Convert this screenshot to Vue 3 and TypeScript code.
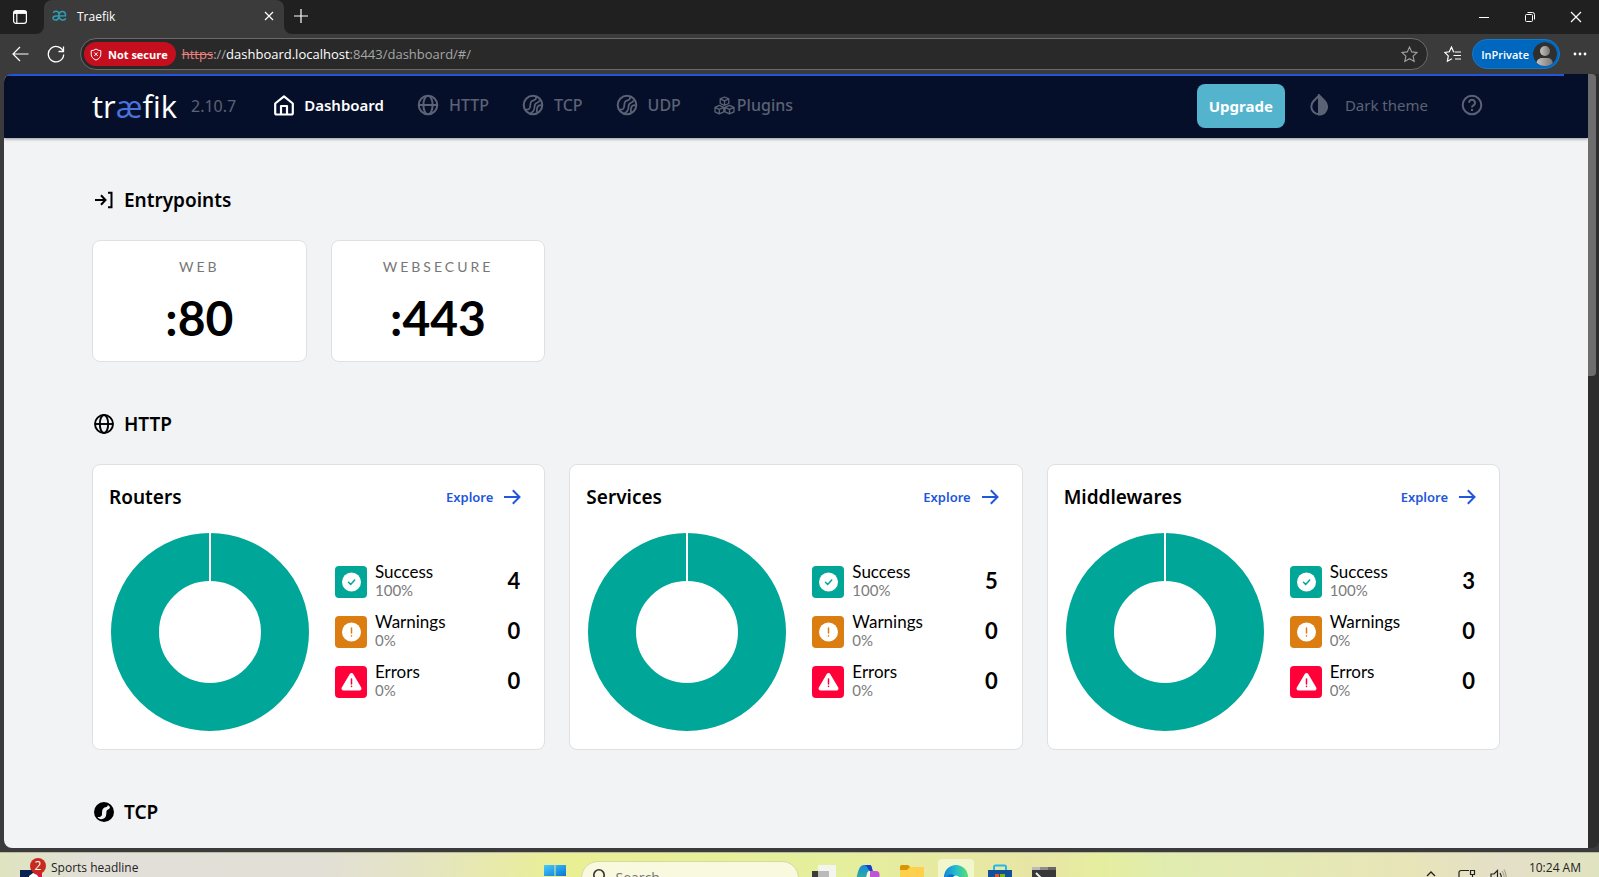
<script setup lang="ts">
interface Stat { label: string; percent: string; value: number; kind: 'success' | 'warning' | 'error' }
interface Panel { title: string; stats: Stat[] }

const entrypoints = [
  { name: 'WEB', port: ':80' },
  { name: 'WEBSECURE', port: ':443' },
]

function makePanel(title: string, ok: number): Panel {
  return {
    title,
    stats: [
      { label: 'Success', percent: '100%', value: ok, kind: 'success' },
      { label: 'Warnings', percent: '0%', value: 0, kind: 'warning' },
      { label: 'Errors', percent: '0%', value: 0, kind: 'error' },
    ],
  }
}

const panels: Panel[] = [makePanel('Routers', 4), makePanel('Services', 5), makePanel('Middlewares', 3)]
const nav = ['HTTP', 'TCP', 'UDP']
</script>

<template>
  <div class="desktop">
    <div class="window">
      <div class="tabbar">
        <button class="plain tab-actions" aria-label="Tab actions">
          <svg width="16" height="16" viewBox="0 0 16 16" fill="none" stroke="#fff" stroke-width="1.2"><rect x="1.6" y="1.6" width="12.8" height="12.8" rx="2.4" /><path d="M1.6 3.4h12.8" stroke-width="3" /><path d="M4.8 4v10" /></svg>
        </button>
        <div class="tab">
          <svg class="favicon" width="15" height="12" viewBox="0 0 15 12" fill="none" stroke="#2f9fb8" stroke-width="1.5" stroke-linecap="round"><path d="M1.5 2.2C3 .8 6.2.6 6.8 3.2c.5 2.3.4 6.900-3 6.900-3.800 0-3.700-4 .2-4.200l9.500-.1C13.800 2.700 12 1.200 10 1.500 7.500 1.900 6.800 4 7 6.200c.3 3.700 4 4.800 6.500 2.700" /></svg>
          <span class="tab-title">Traefik</span>
          <button class="plain" aria-label="Close tab"><svg width="10" height="10" viewBox="0 0 10 10" stroke="#fff" stroke-width="1.2"><path d="M1 1l8 8M9 1L1 9" /></svg></button>
        </div>
        <button class="plain new-tab" aria-label="New tab"><svg width="14" height="14" viewBox="0 0 14 14" stroke="#fff" stroke-width="1.2"><path d="M7 0v14M0 7h14" /></svg></button>
        <div class="win-buttons">
          <button class="plain" aria-label="Minimize"><svg width="12" height="12" viewBox="0 0 12 12" stroke="#fff"><path d="M1 6.500h10" /></svg></button>
          <button class="plain" aria-label="Restore"><svg width="12" height="12" viewBox="0 0 12 12" fill="none" stroke="#fff"><rect x="1.500" y="3.500" width="7" height="7" rx="1" /><path d="M3.500 1.500h5a2 2 0 0 1 2 2v5" /></svg></button>
          <button class="plain" aria-label="Close"><svg width="12" height="12" viewBox="0 0 12 12" stroke="#fff" stroke-width="1.200"><path d="M1 1l10 10M11 1L1 11" /></svg></button>
        </div>
      </div>

      <div class="toolbar">
        <button class="plain back" aria-label="Back"><svg width="18" height="16" viewBox="0 0 18 16" fill="none" stroke="#fff" stroke-width="1.200"><path d="M16.500 8H1M8 1L1 8l7 7" /></svg></button>
        <button class="plain reload" aria-label="Refresh"><svg width="18" height="18" viewBox="0 0 18 18" fill="none" stroke="#fff" stroke-width="1.300"><path d="M16.400 7A7.700 7.700 0 1 0 16.700 9.500M16.500 1.500V6.500H11.500" /></svg></button>
        <div class="address">
          <span class="insecure">
            <svg width="12" height="13" viewBox="0 0 12 13" fill="none" stroke="#fff"><path d="M6 1c1.300 1 2.800 1.600 4.800 1.700v3.500c0 2.600-1.700 4.700-4.800 5.900-3.100-1.200-4.800-3.300-4.800-5.900V2.700C3.200 2.600 4.700 2 6 1z" /><path d="M4.200 4.400l3.600 3.600M7.800 4.400L4.200 8" /></svg>
            Not secure
          </span>
          <span class="url"><s>https</s>://<b>dashboard.localhost</b>:8443/dashboard/#/</span>
          <button class="plain star" aria-label="Add to favorites"><svg width="17" height="17" viewBox="0 0 17 17" fill="none" stroke="#a0a0a0" stroke-width="1.100"><path d="M8.500 1l2.200 4.900 5.300.6-3.900 3.600 1.100 5.300-4.700-2.700-4.700 2.700 1.100-5.300L1 6.500l5.300-.6z" /></svg></button>
        </div>
        <button class="plain" aria-label="Favorites"><svg width="18" height="17" viewBox="0 0 18 17" fill="none" stroke="#fff" stroke-width="1.200"><path d="M10.500 6l-1-.2L7.500 1 5.300 5.800l-4.500.7 3.500 3.400-.9 5.300 4.600-2.500M11 6h6M9.500 9.500H17M11 13h6" /></svg></button>
        <button class="profile">InPrivate
          <svg width="24" height="24" viewBox="0 0 24 24"><defs><linearGradient id="avatar"><stop offset="0" stop-color="#c8c3bf" /><stop offset="1" stop-color="#777" /></linearGradient><clipPath id="round"><circle cx="12" cy="12" r="12" /></clipPath></defs><g clip-path="url(#round)"><circle cx="12" cy="12" r="12" fill="#302f2f" /><circle cx="12" cy="9" r="5" fill="url(#avatar)" /><path d="M3 24c0-6 3-8 6-8h6c4 0 5 4 5 8z" fill="url(#avatar)" /></g></svg>
        </button>
        <button class="plain more" aria-label="Settings and more"><svg width="14" height="4" viewBox="0 0 14 4" fill="#fff"><circle cx="2" cy="2" r="1.400" /><circle cx="7" cy="2" r="1.400" /><circle cx="12" cy="2" r="1.400" /></svg></button>
      </div>

      <div class="viewport">
        <div class="page">
          <header class="header">
            <a class="logo" href="#/" aria-label="træfik">tr<i>æ</i>fik</a>
            <span class="version">2.10.7</span>
            <nav class="nav">
              <a href="#/" class="active">
                <svg width="20" height="21" viewBox="0 0 20 21" fill="none" stroke="currentColor" stroke-width="2.200" stroke-linejoin="round"><path d="M1.200 8.500L10 1.300l8.800 7.200V18a1.500 1.500 0 0 1-1.500 1.500H2.700A1.500 1.500 0 0 1 1.200 18z" /><path d="M7 19v-8h6v8" /></svg>Dashboard
              </a>
              <a v-for="n in nav" :key="n" :href="'#/' + n.toLowerCase()">
                <svg v-if="n === 'HTTP'" width="22" height="22" viewBox="0 0 22 22" fill="none" stroke="currentColor" stroke-width="2"><circle cx="11" cy="11" r="9.300" /><ellipse cx="11" cy="11" rx="4.600" ry="9.300" /><path d="M2 11h18" /></svg>
                <svg v-else width="22" height="22" viewBox="0 0 22 22" fill="none" stroke="currentColor" stroke-width="2"><circle cx="11" cy="11" r="9.300" /><path d="M3.500 15.500c3 .6 4.500-.5 4.700-3.200C8.500 8.500 8.500 7 11.700 6.300c1.800-.4 2.500-1.400 2.500-3.300M8.500 19c3-1 4-2.800 4-6 0-3 .8-3.600 2.500-4.200 1.300-.5 2.200-1.300 2.700-2.400M15 18.500c-.3-2.500-.2-5 1-6.300.8-.8 2-1 3.500-1" stroke-width="1.700" /></svg>{{ n }}
              </a>
              <a href="#/plugins" class="plugins">
                <svg width="21" height="19" viewBox="0 0 21 19" fill="none" stroke="currentColor" stroke-width="1.300" stroke-linejoin="round"><path d="M10.500 1l4.300 1.900v4.600l-4.300 1.900-4.300-1.900V2.900zM6.200 2.900l4.300 2 4.300-2M10.500 4.900v4.500M5.300 9.400l4.500 1.900v4.600l-4.500 2-4.300-2v-4.600zM1 11.300l4.300 2 4.500-2M5.300 13.300v4.600M15.500 9.400l4.500 1.900v4.600l-4.500 2-4.500-2v-4.600zM11 11.300l4.500 2 4.500-2M15.500 13.300v4.600" /></svg>Plugins
              </a>
            </nav>
            <div class="header-actions">
              <a class="upgrade" href="#upgrade">Upgrade</a>
              <button class="plain theme"><svg width="20" height="22" viewBox="0 0 20 22" fill="none" stroke="currentColor" stroke-width="2"><path d="M10 1.500L4.400 7.300a7.700 7.700 0 1 0 11.200 0z" /><path d="M10 1.500l5.600 5.800A7.700 7.700 0 0 1 10 20.500z" fill="currentColor" /></svg>Dark theme</button>
              <button class="plain help" aria-label="Help"><svg width="22" height="22" viewBox="0 0 22 22" fill="none" stroke="currentColor" stroke-width="2"><circle cx="11" cy="11" r="9.300" /><path d="M8 8.800a3 3 0 1 1 4.500 2.600c-1 .6-1.500 1-1.500 2.100" /><path d="M11 15v2.100" /></svg></button>
            </div>
          </header>

          <main class="content">
            <h2 class="heading"><svg width="20" height="20" viewBox="0 0 20 20" fill="none" stroke="#000" stroke-width="2"><path d="M1 10h10M7 5.200L11.500 10 7 14.800M14 2.800h3.500v14.400H14" /></svg>Entrypoints</h2>
            <div class="entry-grid">
              <section v-for="e in entrypoints" :key="e.name" class="card entry">
                <div class="entry-name">{{ e.name }}</div>
                <div class="entry-port">{{ e.port }}</div>
              </section>
            </div>

            <h2 class="heading"><svg width="20" height="20" viewBox="0 0 20 20" fill="none" stroke="#000" stroke-width="1.900"><circle cx="10" cy="10" r="9" /><ellipse cx="10" cy="10" rx="4.200" ry="9" /><path d="M1 10h18" /></svg>HTTP</h2>
            <div class="panel-grid">
              <section v-for="p in panels" :key="p.title" class="card panel">
                <div class="panel-head">
                  <h3>{{ p.title }}</h3>
                  <a href="#/http">Explore<svg width="18" height="16" viewBox="0 0 18 16" fill="none" stroke="currentColor" stroke-width="2"><path d="M1 8h15M9.800 1.300L16.500 8l-6.700 6.700" /></svg></a>
                </div>
                <div class="panel-body">
                  <svg class="donut" width="200" height="200" viewBox="0 0 200 200"><circle cx="100" cy="100" r="75" fill="none" stroke="#00a697" stroke-width="48" /><path d="M100 0v50" stroke="#fff" stroke-width="2" /></svg>
                  <ul class="stats">
                    <li v-for="s in p.stats" :key="s.label">
                      <span class="badge" :class="s.kind">
                        <svg width="32" height="32" viewBox="0 0 32 32" fill="none" stroke-linecap="round">
                          <template v-if="s.kind === 'success'"><circle cx="16.500" cy="16" r="9.500" fill="#fff" /><path d="M13.500 16.300l2.200 2.200 4-4.400" stroke="#00a697" stroke-width="1.500" /></template>
                          <template v-else-if="s.kind === 'warning'"><circle cx="16.500" cy="16" r="9.500" fill="#fff" /><path d="M16.500 12v5M16.500 19.800v.2" stroke="#db7d11" stroke-width="1.500" /></template>
                          <template v-else><path d="M16.500 9L24.500 22.500H8.500z" fill="#fff" stroke="#fff" stroke-width="4" stroke-linejoin="round" /><path d="M16.500 13v5M16.500 20.200v.2" stroke="#ff0039" stroke-width="1.500" /></template>
                        </svg>
                      </span>
                      <span class="stat-text"><span class="stat-label">{{ s.label }}</span><span class="stat-percent">{{ s.percent }}</span></span>
                      <strong>{{ s.value }}</strong>
                    </li>
                  </ul>
                </div>
              </section>
            </div>

            <h2 class="heading"><svg width="20" height="20" viewBox="0 0 20 20"><circle cx="10" cy="10" r="10" fill="#000" /><path d="M3.500 15c2 .2 4.300-.2 4.500-2.500.2-3.500 0-6.500 3.500-7.200 1.500-.3 2-1 2.500-2.300l2 2c-.2 1.500-1 2-2 2.600-1.800 1-1.500 2-1.700 4.400-.2 3-1.800 5.200-5.300 5.200-1.500 0-2.500-.800-3.500-2.200z" fill="#f1f3f5" /></svg>TCP</h2>
          </main>
        </div>
        <div class="scrollbar"><div class="thumb"></div></div>
        <div class="progress"></div>
      </div>
    </div>

    <footer class="taskbar">
      <a class="news" href="#news">
        <svg width="28" height="28" viewBox="0 0 28 28"><path d="M0 12h22v16H0z" fill="#0b2250" /><path d="M13 28V12h9v16z" fill="#d21845" /><path d="M9 18l4-3 4 2 3 4v7H9z" fill="#fff" /><circle cx="18" cy="8" r="8" fill="#c72b1e" /><text x="18" y="12" text-anchor="middle" fill="#fff" font-size="12">2</text></svg>
        Sports headline
      </a>
      <div class="dock">
        <button class="plain" aria-label="Start"><svg width="22" height="24" viewBox="0 0 22 24"><defs><linearGradient id="start" x2="1" y2="1"><stop stop-color="#47cbfb" /><stop offset="1" stop-color="#0876d5" /></linearGradient></defs><path d="M0 1h10.500v11H0zM11.500 1H22v11H11.500z" fill="url(#start)" /></svg></button>
        <label class="search"><svg width="14" height="20" viewBox="0 0 14 20" fill="none" stroke="#333" stroke-width="1.600"><circle cx="7" cy="8" r="5.200" /><path d="M3.500 12L0 16" /></svg><input type="text" placeholder="Search" aria-label="Search"></label>
        <button class="plain" aria-label="Task view"><svg width="24" height="24" viewBox="0 0 24 24"><path d="M6 1h18v16H6z" fill="#f5f5f0" /><path d="M0 7h17v16H0z" fill="#3c3c3a" /><path d="M6 7h11v16H6z" fill="#bababa" /></svg></button>
        <button class="plain" aria-label="Copilot"><svg width="24" height="24" viewBox="0 0 24 24"><defs><linearGradient id="cop" x2="0" y2="1"><stop stop-color="#1587e8" /><stop offset="1" stop-color="#35b58b" /></linearGradient></defs><path d="M0 16C2 8 3 1 8 1h7L9 16z" fill="url(#cop)" /><path d="M8 1h6c2 0 2 4 3 6h-3c-2 0-2-6-6-6z" fill="#173dc8" /><path d="M14 7h6c4 0 4 3 3 9h-9z" fill="#be55d7" /><path d="M11 9q1-2 3-2v9h-4z" fill="#f4f6dc" /></svg></button>
        <button class="plain" aria-label="File Explorer"><svg width="24" height="24" viewBox="0 0 24 24"><path d="M0 3q0-2 2-2h6l3 2h13v20H0z" fill="#ffd04d" /><path d="M0 3q0-2 2-2h6l2 2-3 3H0z" fill="#d79704" /></svg></button>
        <button class="plain edge" aria-label="Microsoft Edge"><svg width="24" height="24" viewBox="0 0 24 24"><defs><linearGradient id="edge"><stop stop-color="#1684d8" /><stop offset=".5" stop-color="#27bdcb" /><stop offset="1" stop-color="#59df70" /></linearGradient></defs><circle cx="12" cy="12" r="12" fill="url(#edge)" /><path d="M1 17C2 9 8 7 12 12l-3 12z" fill="#0874c3" /><circle cx="12" cy="14" r="3.500" fill="#f3f7ce" /></svg></button>
        <button class="plain" aria-label="Microsoft Store"><svg width="24" height="24" viewBox="0 0 24 24"><path d="M6 8V3q0-1.500 1.500-1.500h9Q18 1.500 18 3v5" fill="none" stroke="#22b8f0" stroke-width="2" /><path d="M0 6h24v18H0z" fill="#10519a" /><path d="M7 10h4v4H7z" fill="#f25022" /><path d="M12 10h5v4h-5z" fill="#7fba00" /></svg></button>
        <button class="plain" aria-label="Terminal"><svg width="24" height="24" viewBox="0 0 24 24"><path d="M0 3h24v21H0z" fill="#383838" /><path d="M0 3h8v3H0z" fill="#bbb" /><path d="M8 3h8v3H8z" fill="#8d8d8d" /><path d="M16 3h8v3h-8z" fill="#666" /><path d="M4 9l5 5-5 5" fill="none" stroke="#eee" stroke-width="2" /></svg></button>
      </div>
      <div class="tray">
        <svg width="10" height="8" viewBox="0 0 10 8" fill="none" stroke="#222" stroke-width="1.300"><path d="M1 7l4-4 4 4" /></svg>
        <svg width="18" height="14" viewBox="0 0 18 14" fill="none" stroke="#222" stroke-width="1.200"><path d="M11 1.500H3a2 2 0 0 0-2 2V14M12.500 1.500h4v4h-4zM14.500 6v8" /></svg>
        <svg width="17" height="12" viewBox="0 0 17 12" fill="none" stroke="#222" stroke-width="1.200"><path d="M1 12V5h3l3.500-3.500V12M10 4q2 3 1 8" /><path d="M12 2q3 4 2 10M14 .5q3 5 2 11" stroke="#aaa58e" /></svg>
        <time>10:24 AM</time>
      </div>
    </footer>
  </div>
</template>

<style>
html, body { margin: 0; background: #3b3b3b; }
</style>

<style scoped>
* { box-sizing: border-box; }
.desktop { height: 100vh; display: flex; flex-direction: column; overflow: hidden; font-family: "Open Sans", "Noto Sans", sans-serif; }
svg { display: block; flex: none; }
a { text-decoration: none; color: inherit; }
.plain { border: 0; padding: 0; background: none; color: inherit; font: inherit; display: flex; align-items: center; justify-content: center; flex: none; }
.window { flex: 1; min-height: 0; display: flex; flex-direction: column; background: #3b3b3b; }
.tabbar { height: 34px; flex: none; display: flex; background: linear-gradient(90deg, #3b3b3b 300px, #202020 300px); color: #fff; }
.tab-actions { width: 44px; padding-right: 4px; background: #202020; border-bottom-right-radius: 8px; }
.tab { width: 240px; padding: 0 10px 2px 8px; display: flex; align-items: center; background: #3b3b3b; border-radius: 8px 8px 0 0; box-shadow: 0 -8px 0 8px #202020; clip-path: inset(0); font-size: 12px; }
.tab-title { flex: 1; padding-left: 10px; }
.new-tab { width: 34px; padding-bottom: 2px; background: #202020; border-bottom-left-radius: 8px; }
.win-buttons { margin-left: auto; display: flex; }
.win-buttons button { width: 46px; }
.toolbar { height: 40px; flex: none; display: flex; align-items: center; padding: 0 12px; color: #fff; }
.reload { margin: 0 15px 0 17px; }
.address { flex: 1; height: 32px; margin-right: 16px; padding: 0 9px 0 3px; display: flex; align-items: center; background: #292929; border: 1px solid #6a6a6a; border-radius: 16px; }
.insecure { height: 24px; padding: 0 8px 0 6px; display: flex; align-items: center; gap: 6px; border-radius: 12px; background: #c50f1f; font-size: 11px; font-weight: 700; white-space: nowrap; }
.url { flex: 1; margin-left: 6px; font-size: 13px; color: #a6a6a6; white-space: nowrap; }
.url s { color: #e8817f; }
.url b { color: #fff; font-weight: 400; }
.profile { height: 30px; margin: 0 13px 0 10px; padding: 0 2px 0 8px; border: 1px solid #1379cb; border-radius: 15px; background: #0067bf; color: #fff; font: 600 11px "Open Sans", sans-serif; display: flex; align-items: center; gap: 4px; }
.viewport { position: relative; flex: 1; min-height: 0; margin: 0 0 4px 4px; display: flex; overflow: hidden; border-radius: 8px 0 8px 8px; background: #2d2d2d; }
.page { flex: 1; overflow: hidden; background: #f1f3f5; color: #000; font-family: Lato, "Noto Sans", sans-serif; }
.progress { position: absolute; top: 0; left: 0; right: 35px; height: 2px; background: #2256db; }
.scrollbar { width: 11px; flex: none; background: #2d2d2d; }
.thumb { width: 8px; height: 39%; border-radius: 0 4px 4px 0; background: #6d6d6d; }
.header { height: 64px; padding: 0 105px 0 88px; display: flex; align-items: center; background: #060f29; color: #5c6275; box-shadow: 0 1px 3px #00000066; font-family: "Noto Sans", sans-serif; font-size: 16px; }
.logo { color: #fff; font: 400 31px "Open Sans", sans-serif; }
.logo i { color: #4a72df; font-style: normal; }
.version { margin-left: 14px; }
.nav { display: flex; gap: 33px; margin-left: 38px; padding-bottom: 2px; }
.nav a { display: flex; align-items: center; gap: 10px; font-weight: 500; }
.nav a.active { color: #fff; font-weight: 600; font-size: 15px; }
.nav .plugins { gap: 2px; }
.header-actions { margin-left: auto; display: flex; align-items: center; font-size: 15px; }
.upgrade { height: 44px; padding: 0 12px; display: flex; align-items: center; border-radius: 8px; background: #54b4cd; color: #fff; font-weight: 700; }
.theme { gap: 16px; margin: 0 33px 0 24px; padding-bottom: 2px; }
.help { padding-bottom: 2px; }
.content { padding: 48px 88px 0; }
.heading { height: 28px; margin: 0 0 26px; display: flex; align-items: center; gap: 10px; padding-left: 2px; font-family: "Noto Sans", sans-serif; font-size: 19px; font-weight: 600; }
.card { background: #fff; border: 1px solid #dfe0e2; border-radius: 8px; }
.entry-grid { display: grid; grid-template-columns: repeat(6, 1fr); gap: 24px; margin-bottom: 48px; }
.entry { height: 122px; padding-top: 16px; text-align: center; }
.entry-name { font-size: 14px; line-height: 20px; letter-spacing: 3px; color: #777; }
.entry-port { margin-top: 9px; font-size: 48px; line-height: 64px; font-weight: 700; }
.panel-grid { display: grid; grid-template-columns: repeat(3, 1fr); gap: 24px; margin-bottom: 48px; }
.panel { height: 286px; padding: 16px 23px 0 16px; }
.panel-head { height: 32px; display: flex; align-items: center; justify-content: space-between; font-family: "Noto Sans", sans-serif; }
.panel-head h3 { margin: 0; font-size: 19px; font-weight: 600; }
.panel-head a { display: flex; align-items: center; gap: 10px; color: #2256db; font-size: 13px; font-weight: 600; }
.panel-body { margin-top: 19px; padding-left: 1px; display: flex; align-items: center; gap: 25px; }
.stats { flex: 1; list-style: none; margin: 0; padding: 0; display: grid; gap: 18px; }
.stats li { height: 32px; display: flex; align-items: center; }
.badge { border-radius: 4px; }
.success { background: #00a697; }
.warning { background: #db7d11; }
.error { background: #ff0039; }
.stat-text { flex: 1; margin-left: 8px; padding-bottom: 2px; display: flex; flex-direction: column; }
.stat-label { font-size: 17px; line-height: 18px; }
.stat-percent { font-size: 15px; line-height: 18px; color: #7b7b7b; }
.stats strong { padding: 0 1px 4px 0; font-size: 22px; font-weight: 700; }
.taskbar { height: 25px; flex: none; overflow: hidden; display: grid; grid-template-columns: 1fr auto 1fr; align-items: start; border-top: 1px solid #b9b9a6; background: linear-gradient(90deg, #dfe4c0, #e2dfd9 6%, #e2dfd6 20%, #e5e5c0 27%, #e9ef94 35%, #e5ef9c 52%, #e8e5a5 65%, #e5ee9f 69%, #e0ecb0 73%, #e8e5b8 88%, #e4dfc8 94%, #e0e3c0); color: #222; font-size: 12px; }
.news { display: flex; gap: 3px; padding: 5px 0 0 20px; line-height: 20px; }
.dock { display: flex; align-items: start; gap: 20px; padding-top: 11px; }
.search { width: 218px; height: 34px; margin: -3px -7px 0 -5px; padding: 5px 10px; display: flex; gap: 10px; border: 1px solid #d5d9a2; border-radius: 17px; background: #f9f9df; }
.search input { width: 100%; height: 20px; padding: 0; border: 0; background: none; font: 14px "Open Sans", sans-serif; }
.edge { width: 36px; height: 36px; margin: -5px -6px 0; border-radius: 4px; background: #f2f6cd; }
.tray { display: flex; justify-content: flex-end; align-items: start; gap: 14px; padding: 16px 18px 0 0; }
.tray svg:first-child { margin-right: 8px; }
.tray time { margin: -11px 0 0 8px; line-height: 20px; }
</style>
